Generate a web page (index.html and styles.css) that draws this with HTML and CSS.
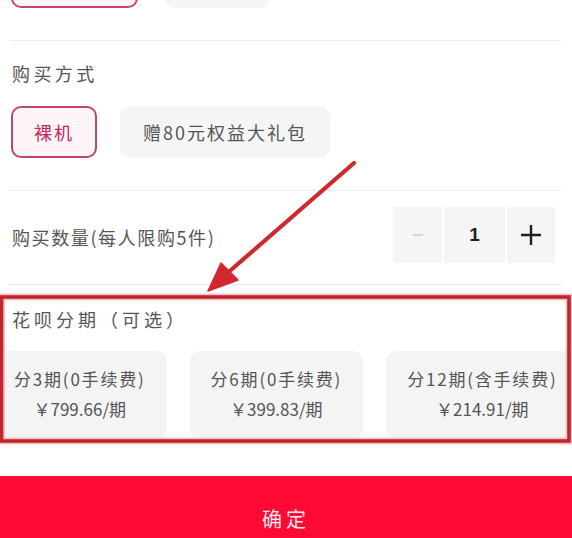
FILE: index.html
```html
<!DOCTYPE html>
<html lang="zh-CN">
<head>
<meta charset="utf-8">
<title>购买选项</title>
<link rel="stylesheet" href="styles.css">
</head>
<body>
<div class="page">
  <div class="sheet">
    <div class="chips chips-top">
      <div class="chip chip-on chip-w1"></div>
      <div class="chip chip-w2"></div>
    </div>
    <div class="divider"></div>

    <div class="label label-way">购买方式</div>
    <div class="chips">
      <div class="chip chip-on">裸机</div>
      <div class="chip">赠80元权益大礼包</div>
    </div>
    <div class="divider"></div>

    <div class="qty-row">
      <div class="label">购买数量(每人限购5件)</div>
      <div class="stepper">
        <div class="step step-minus">
          <svg width="12" height="4" viewBox="0 0 12 4"><path d="M1 2H11" stroke="#d4d4d4" stroke-width="2"/></svg>
        </div>
        <div class="step step-num">1</div>
        <div class="step step-plus">
          <svg width="24" height="24" viewBox="0 0 24 24"><path d="M12 2V22M2 12H22" stroke="#1f1f1f" stroke-width="2.4"/></svg>
        </div>
      </div>
    </div>
    <div class="divider"></div>

    <div class="label label-hb">花呗分期（可选）</div>
  </div>

  <div class="cards">
    <div class="card">
      <div class="card-title">分3期(0手续费)</div>
      <div class="card-price">￥799.66/期</div>
    </div>
    <div class="card">
      <div class="card-title">分6期(0手续费)</div>
      <div class="card-price">￥399.83/期</div>
    </div>
    <div class="card">
      <div class="card-title">分12期(含手续费)</div>
      <div class="card-price">￥214.91/期</div>
    </div>
  </div>

  <div class="confirm">确定</div>

  <svg class="annot" width="572" height="538" viewBox="0 0 572 538">
    <rect x="1.5" y="297" width="567.5" height="144" fill="none" stroke="#f3c4c6" stroke-width="7"/>
    <rect x="1.5" y="297" width="567.5" height="144" fill="none" stroke="#c1262c" stroke-width="3.6"/>
    <line x1="354" y1="163" x2="224" y2="276" stroke="#d0282e" stroke-width="4.2" stroke-linecap="round"/>
    <polygon points="208,291 221,263 238,280" fill="#d0282e" stroke="#d0282e" stroke-width="1.5" stroke-linejoin="round"/>
  </svg>
</div>
</body>
</html>
```

FILE: styles.css
```css
html, body {
  margin: 0;
  padding: 0;
  background: #ffffff;
}

body {
  font-family: "Noto Sans CJK SC", "Noto Sans", sans-serif;
  color: #555555;
  width: 572px;
  height: 538px;
  overflow: hidden;
}

.page {
  position: relative;
  width: 572px;
  height: 538px;
  overflow: hidden;
}

.sheet {
  padding: 0 10px 0 10px;
}

.chips {
  display: flex;
  gap: 23px;
  padding-left: 1px;
}

.chips-top {
  margin-top: -44px;
  gap: 27px;
}

.chip {
  box-sizing: border-box;
  height: 52px;
  padding: 0 23px;
  border-radius: 10px;
  background: #f5f5f5;
  font-size: 18px;
  letter-spacing: 2px;
  line-height: 52px;
  color: #555555;
  white-space: nowrap;
}

.chip-on {
  background: #fdf5f7;
  border: 2px solid #c2486a;
  line-height: 48px;
  color: #c3275a;
  padding: 0 21px;
}

.chip-w1 { width: 127px; }
.chip-w2 { width: 105px; }

.divider {
  height: 1px;
  background: #ebebeb;
  margin-top: 32px;
}

.label {
  font-size: 18px;
  line-height: 24px;
  letter-spacing: 2px;
  color: #555555;
  padding-left: 2px;
  margin-top: 20px;
  margin-bottom: 21px;
  white-space: nowrap;
}

.label-way {
  letter-spacing: 3.4px;
}

.qty-row {
  display: flex;
  align-items: center;
  justify-content: space-between;
  padding: 16px 7px 0 0;
  margin-bottom: -11px;
}

.qty-row .label {
  margin: 0;
  padding-top: 4px;
  letter-spacing: 1.6px;
}

.stepper {
  display: flex;
  gap: 2px;
  height: 56px;
}

.step {
  background: #f5f5f5;
  display: flex;
  align-items: center;
  justify-content: center;
}

.step-minus { width: 49px; }
.step-num {
  width: 61px;
  font-family: "Liberation Sans", Arial, sans-serif;
  font-size: 19px;
  font-weight: bold;
  color: #1f1f1f;
}
.step-plus { width: 48px; }

.label-hb {
  margin-top: 22px;
  margin-bottom: 20px;
  letter-spacing: 4px;
}

.cards {
  display: flex;
  gap: 23px;
  margin-left: -7px;
  height: 88px;
}

.card {
  flex: none;
  box-sizing: border-box;
  height: 88px;
  padding: 13px 21px 15px;
  border-radius: 10px;
  background: #f4f4f4;
  text-align: center;
  white-space: nowrap;
}

.card-title {
  font-size: 17px;
  line-height: 30px;
  letter-spacing: 1.8px;
  color: #555555;
}

.card-price {
  font-size: 17px;
  line-height: 30px;
  color: #555555;
}

.confirm {
  margin-top: 37px;
  height: 86px;
  background: #fe0a34;
  color: #fde8ec;
  font-size: 20px;
  letter-spacing: 4px;
  line-height: 86px;
  text-align: center;
}

.annot {
  position: absolute;
  left: 0;
  top: 0;
  pointer-events: none;
}
```
